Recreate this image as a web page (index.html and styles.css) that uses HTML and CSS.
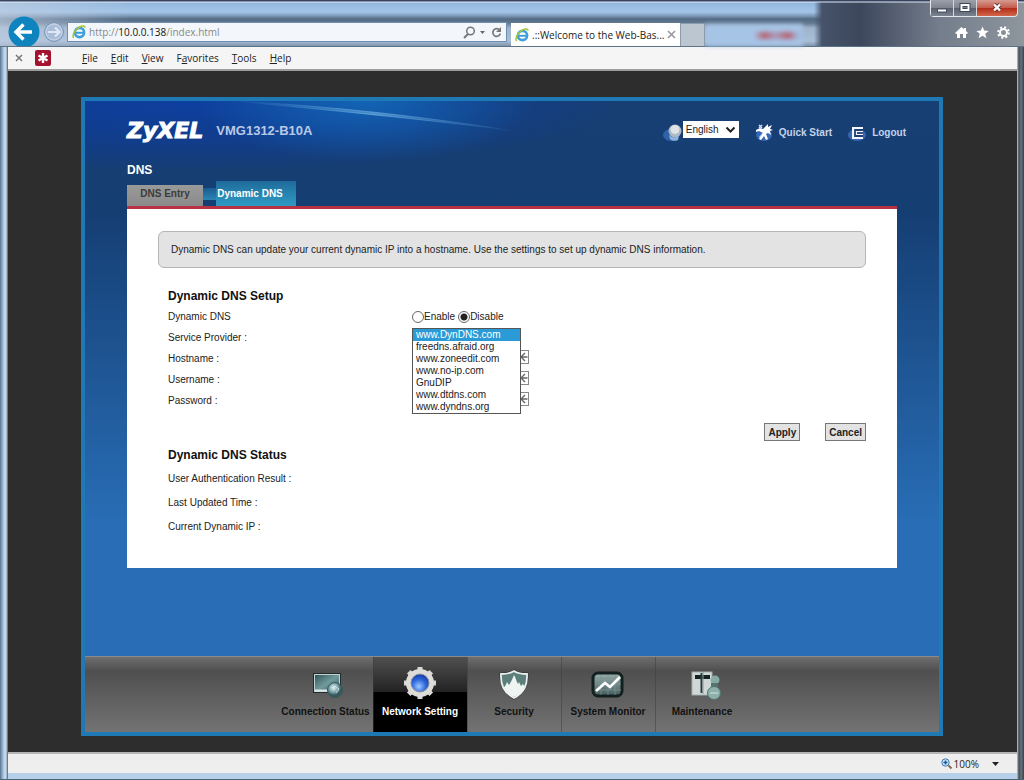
FILE: index.html
```
<!DOCTYPE html>
<html lang="en">
<head>
  <meta charset="UTF-8">
  <title>.::Welcome to the Web-Based Configurator::.</title>
  <link rel="stylesheet" href="styles.css">
</head>
<body>
  <div class="window">
    <header class="chrome">
      <div class="glass-ghost"></div>
      <div class="window-buttons">
        <button type="button" class="win-btn" aria-label="Minimize"><svg width="12" height="12" viewBox="0 0 12 12"><rect x="1.500" y="7" width="9" height="3" fill="#fff" stroke="#4a4f5c"/></svg></button>
        <button type="button" class="win-btn" aria-label="Maximize"><svg width="12" height="12" viewBox="0 0 12 12"><rect x="2.500" y="3" width="7" height="5" fill="none" stroke="#3f4655" stroke-width="4"/><rect x="2.500" y="3" width="7" height="5" fill="none" stroke="#fff" stroke-width="2"/></svg></button>
        <button type="button" class="win-btn win-close" aria-label="Close"><svg width="12" height="12" viewBox="0 0 12 12"><path d="M3 2.500l6 6M9 2.500l-6 6" stroke="#64302c" stroke-width="4"/><path d="M3 2.500l6 6M9 2.500l-6 6" stroke="#fff" stroke-width="2.400"/></svg></button>
      </div>
      <div class="nav-row">
        <button type="button" class="back" aria-label="Back"><svg width="32" height="32" viewBox="0 0 32 32"><circle cx="16" cy="16" r="15.500" fill="#0e84bf"/><path d="M24 16H9M15.500 8.500L8 16l7.500 7.500" fill="none" stroke="#fff" stroke-width="3.400"/></svg></button>
        <button type="button" class="forward" aria-label="Forward"><svg width="22" height="22" viewBox="0 0 22 22"><circle cx="11" cy="11" r="9.500" fill="#a9bdd8" stroke="#7d93b5"/><circle cx="11" cy="11" r="8" fill="none" stroke="#c9d7ea"/><path d="M5 11h11M12 6.500l4.500 4.500-4.500 4.500" fill="none" stroke="#dfe9f6" stroke-width="2.200"/></svg></button>
        <div class="address">
          <svg class="ie" width="14" height="14" viewBox="0 0 14 14"><circle cx="7.500" cy="7.500" r="4.600" fill="none" stroke="#3f9fdc" stroke-width="2.600"/><path d="M4 7.800h8" stroke="#3f9fdc" stroke-width="2"/><path d="M1.500 13C0 10 3 4 8 1.800c3-1.300 5-.8 5 1" fill="none" stroke="#a9c63a" stroke-width="1.600"/></svg>
          <p class="url">http://<b>10.0.0.138</b>/index.html</p>
          <button type="button" class="plain" aria-label="Search"><svg width="13" height="13" viewBox="0 0 13 13"><circle cx="7.500" cy="5" r="3.800" fill="none" stroke="#777" stroke-width="1.500"/><path d="M5 8L1 12" stroke="#777" stroke-width="2"/></svg></button>
          <button type="button" class="plain" aria-label="Show address bar list"><svg width="7" height="13" viewBox="0 0 7 13"><path d="M1 5h5L3.500 8z" fill="#666"/></svg></button>
          <button type="button" class="plain refresh" aria-label="Refresh"><svg width="13" height="13" viewBox="0 0 13 13"><path d="M9.500 4A3.800 3.800 0 1 0 10.300 7.500" fill="none" stroke="#777" stroke-width="1.700"/><path d="M11 1v5H6z" fill="#777"/></svg></button>
        </div>
        <div class="browser-tab">
          <svg class="ie" width="14" height="14" viewBox="0 0 14 14"><circle cx="7.500" cy="7.500" r="4.600" fill="none" stroke="#3f9fdc" stroke-width="2.600"/><path d="M4 7.800h8" stroke="#3f9fdc" stroke-width="2"/><path d="M1.500 13C0 10 3 4 8 1.800c3-1.300 5-.8 5 1" fill="none" stroke="#a9c63a" stroke-width="1.600"/></svg>
          <span class="browser-tab-title">.::Welcome to the Web-Bas...</span>
          <button type="button" class="plain" aria-label="Close tab"><svg width="9" height="9" viewBox="0 0 9 9"><path d="M1 1l7 7M8 1L1 8" stroke="#999" stroke-width="1.600"/></svg></button>
        </div>
        <button type="button" class="new-tab" aria-label="New tab"></button>
        <div class="tools">
          <button type="button" class="plain" aria-label="Home"><svg width="13" height="13" viewBox="0 0 13 13"><path d="M6.500 1L0 7l1.200 1L2 7.400V12h3V8h3v4h3V7.400l.8.600L13 7l-2-1.900V2H9v1.300z" fill="#fff"/></svg></button>
          <button type="button" class="plain" aria-label="Favorites"><svg width="13" height="13" viewBox="0 0 13 13"><path d="M6.500.500l1.700 4.100 4.500.300-3.500 2.900 1.200 4.400-3.900-2.500-3.900 2.500 1.200-4.400L.300 4.900l4.500-.300z" fill="#fff"/></svg></button>
          <button type="button" class="plain" aria-label="Tools"><svg width="13" height="13" viewBox="0 0 13 13"><circle cx="6.500" cy="6.500" r="5.300" fill="none" stroke="#fff" stroke-width="2" stroke-dasharray="2.080"/><circle cx="6.500" cy="6.500" r="3.500" fill="none" stroke="#fff" stroke-width="2"/></svg></button>
        </div>
      </div>
    </header>

    <nav class="menu-bar">
      <button type="button" class="plain" aria-label="Close menu bar"><svg width="8" height="8" viewBox="0 0 8 8"><path d="M1 1l6 6M7 1L1 7" stroke="#777" stroke-width="1.500"/></svg></button>
      <button type="button" class="plain addon" aria-label="Add-on"><svg width="16" height="16" viewBox="0 0 16 16"><rect width="16" height="16" rx="2" fill="#a3122f"/><path d="M8 3v10M3.500 5.500l9 5M12.500 5.500l-9 5" stroke="#fff" stroke-width="2.400"/></svg></button>
      <a href="#file"><u>F</u>ile</a>
      <a href="#edit"><u>E</u>dit</a>
      <a href="#view"><u>V</u>iew</a>
      <a href="#favorites">F<u>a</u>vorites</a>
      <a href="#tools"><u>T</u>ools</a>
      <a href="#help"><u>H</u>elp</a>
    </nav>

    <main class="page">
      <div class="router">
        <svg class="swoosh" width="440" height="60" viewBox="0 0 440 60"><defs><linearGradient id="swoosh"><stop offset="0" stop-color="#6db4e8" stop-opacity="0"/><stop offset=".5" stop-color="#8ccaf0" stop-opacity=".45"/><stop offset="1" stop-color="#6db4e8" stop-opacity="0"/></linearGradient></defs><path d="M150 0C230 4 330 14 430 30 330 17 230 8 150 0z" fill="url(#swoosh)" stroke="url(#swoosh)"/></svg>
        <div class="router-body">
          <div class="top">
            <span class="logo">ZyXEL</span>
            <span class="model">VMG1312-B10A</span>
            <div class="top-links">
              <label class="language" for="language" aria-label="Language">
                <svg width="20" height="20" viewBox="0 0 20 20"><ellipse cx="8" cy="13" rx="8" ry="6" fill="#2f62a8"/><circle cx="12" cy="9" r="6.500" fill="#aeb9c6"/><circle cx="12" cy="7.500" r="4.500" fill="#dfe3e6"/><path d="M6 13c3 3 7 3 10 1l-1 4c-3 1.500-6 1-8-1z" fill="#8fb2df"/></svg>
                <span class="language-box">
                  <select id="language"><option>English</option></select>
                  <svg class="caret" width="11" height="8" viewBox="0 0 11 8"><path d="M1.500 1.500l4 4 4-4" fill="none" stroke="#222" stroke-width="2"/></svg>
                </span>
              </label>
              <a href="#quickstart">
                <svg width="20" height="20" viewBox="0 0 20 20"><ellipse cx="9" cy="13" rx="8" ry="6" fill="#3569b3"/><path d="M5 16l6-7" stroke="#9fc0ea" stroke-width="3"/><path d="M13 2l0 3 4-2-2 4 3 1-3 1 1 4-3-2-2 1 2 5-2 1-2-4-3 4-2-1 4-6-4-2-3 1 0-2 4-2 3 1z" fill="#fff"/><path d="M4 3l3 3M7 3L4 6" stroke="#cfe0f7" stroke-width="1.500"/></svg>
                Quick Start
              </a>
              <a href="#logout">
                <svg width="20" height="20" viewBox="0 0 20 20"><ellipse cx="9" cy="13" rx="9" ry="6" fill="#3569b3"/><path d="M4 5h11v12H4z" fill="#f2f6fc"/><path d="M15 8H7v6h8" fill="none" stroke="#1d3f74" stroke-width="1.800"/><path d="M9 11h6" stroke="#1d3f74" stroke-width="1.800"/></svg>
                Logout
              </a>
            </div>
          </div>

          <h1 class="page-title">DNS</h1>
          <div class="tabs">
            <a href="#dnsentry" class="tab">DNS Entry</a>
            <span class="tab-link"></span>
            <a href="#dyndns" class="tab tab-active">Dynamic DNS</a>
          </div>

          <div class="panel">
            <p class="info">Dynamic DNS can update your current dynamic IP into a hostname. Use the settings to set up dynamic DNS information.</p>
            <form class="setup">
              <h2>Dynamic DNS Setup</h2>
              <div class="row">
                <span class="name">Dynamic DNS</span>
                <input type="radio" id="enable" name="ddns"><label for="enable">Enable</label>
                <input type="radio" id="disable" name="ddns" class="second" checked><label for="disable">Disable</label>
              </div>
              <div class="row">
                <label class="name" for="provider">Service Provider :</label>
                <div class="provider">
                  <select id="provider" size="7">
                    <option selected>www.DynDNS.com</option>
                    <option>freedns.afraid.org</option>
                    <option>www.zoneedit.com</option>
                    <option>www.no-ip.com</option>
                    <option>GnuDIP</option>
                    <option>www.dtdns.com</option>
                    <option>www.dyndns.org</option>
                  </select>
                </div>
              </div>
              <div class="row">
                <label class="name" for="hostname">Hostname :</label>
                <input type="text" id="hostname" class="field">
                <button type="button" class="fill" aria-label="Fill hostname"><svg width="8" height="10" viewBox="0 0 8 10"><path d="M7.500 5H1M5 1L1 5l4 4" fill="none" stroke="#666" stroke-width="1.400"/></svg></button>
              </div>
              <div class="row">
                <label class="name" for="username">Username :</label>
                <input type="text" id="username" class="field">
                <button type="button" class="fill" aria-label="Fill username"><svg width="8" height="10" viewBox="0 0 8 10"><path d="M7.500 5H1M5 1L1 5l4 4" fill="none" stroke="#666" stroke-width="1.400"/></svg></button>
              </div>
              <div class="row">
                <label class="name" for="password">Password :</label>
                <input type="password" id="password" class="field">
                <button type="button" class="fill" aria-label="Fill password"><svg width="8" height="10" viewBox="0 0 8 10"><path d="M7.500 5H1M5 1L1 5l4 4" fill="none" stroke="#666" stroke-width="1.400"/></svg></button>
              </div>
              <div class="actions">
                <button type="submit">Apply</button>
                <button type="reset">Cancel</button>
              </div>
            </form>
            <section class="status">
              <h2>Dynamic DNS Status</h2>
              <p>User Authentication Result :</p>
              <p>Last Updated Time :</p>
              <p>Current Dynamic IP :</p>
            </section>
          </div>
        </div>

        <nav class="dock">
          <a href="#status" class="dock-item">
            <svg width="34" height="34" viewBox="0 0 34 34"><defs><linearGradient id="scr" x2="1" y2="1"><stop offset="0" stop-color="#2c4a4c"/><stop offset=".5" stop-color="#6f9a9c"/><stop offset="1" stop-color="#35585b"/></linearGradient><radialGradient id="orb" cx=".4" cy=".35"><stop offset="0" stop-color="#dff0f0"/><stop offset=".6" stop-color="#7ba5aa"/><stop offset="1" stop-color="#36575c"/></radialGradient></defs><rect x="4.500" y="7.500" width="27" height="19" fill="url(#scr)" stroke="#1e2c2d"/><rect x="5.500" y="8.500" width="25" height="17" fill="none" stroke="#c4d2d2"/><path d="M6 24.500h22" stroke="#dfe6e6" stroke-width="2"/><circle cx="26" cy="24" r="7.500" fill="url(#orb)" stroke="#39585a"/><path d="M22 22l4-2 4 3-3 4M25 20v4" fill="none" stroke="#d7eaea" stroke-width=".8"/></svg>
            Connection Status
          </a>
          <a href="#network" class="dock-item dock-active">
            <svg width="34" height="34" viewBox="0 0 34 34"><defs><radialGradient id="blue" cx=".45" cy=".65" r=".6"><stop offset="0" stop-color="#9cc8ff"/><stop offset=".5" stop-color="#2e69dc"/><stop offset="1" stop-color="#102d98"/></radialGradient></defs><path d="M17 1v32M1 17h32M5.700 5.700l22.600 22.600M28.300 5.700L5.700 28.300" stroke="#d9d8d4" stroke-width="5"/><circle cx="17" cy="17" r="11.500" fill="url(#blue)" stroke="#dedcd8" stroke-width="5"/><circle cx="17" cy="17" r="9" fill="none" stroke="#8b8f9b"/></svg>
            Network Setting
          </a>
          <a href="#security" class="dock-item">
            <svg width="34" height="34" viewBox="0 0 34 34"><path d="M17 5c3 2 9 3 13 3 .5 10-2 18-13 24C6 26 3.500 18 4 8c4 0 10-1 13-3z" fill="#5d7f7b" stroke="#333" stroke-width="3"/><path d="M17 5c3 2 9 3 13 3 .5 10-2 18-13 24C6 26 3.500 18 4 8c4 0 10-1 13-3z" fill="#5d7f7b" stroke="#e8efed" stroke-width="1.800"/><path d="M6 22c3-2 3-4 4-6l2 3c2-3 3-5 5-10 2 3 2 6 4 9l1-2 2 4 2-2 2 3c-2 4-6 8-11 10-5-2-9-5-11-9z" fill="#edf4f1"/></svg>
            Security
          </a>
          <a href="#monitor" class="dock-item">
            <svg width="34" height="34" viewBox="0 0 34 34"><defs><linearGradient id="mon" x2="0" y2="1"><stop offset="0" stop-color="#9bb0ae"/><stop offset="1" stop-color="#425c5c"/></linearGradient></defs><rect x="2" y="7" width="29" height="23" rx="5" fill="url(#mon)" stroke="#13201f" stroke-width="3"/><path d="M4 12h26M4 18h26M4 24h26M10 9v20M17 9v20M24 9v20" stroke="#7c9492" stroke-width=".7"/><path d="M5 25l9-8 5 4 10-10" fill="none" stroke="#fff" stroke-width="2.600"/></svg>
            System Monitor
          </a>
          <a href="#maintenance" class="dock-item">
            <svg width="38" height="34" viewBox="0 0 38 34"><rect x="9" y="6" width="20" height="23" fill="#cfd8d7" stroke="#a5b0ae"/><path d="M12 9h15v4H12z" fill="#152222"/><path d="M18.500 7v20" stroke="#2a3a3b" stroke-width="2"/><path d="M20 6v22" stroke="#8b9c9c"/><circle cx="32" cy="14" r="4.500" fill="#86aaa4"/><path d="M28 17h7v6h-7z" fill="#52746f"/><circle cx="31" cy="27" r="6.500" fill="#8db0aa" stroke="#52746f"/><path d="M27 27h8" stroke="#d6e5e2"/></svg>
            Maintenance
          </a>
        </nav>
      </div>
    </main>

    <footer class="status-bar">
      <button type="button" class="plain zoom">
        <svg width="11" height="11" viewBox="0 0 11 11"><circle cx="4.500" cy="4.500" r="3.700" fill="#cfe4f7" stroke="#3c78b4"/><path d="M2.500 4.500h4M4.500 2.500v4" stroke="#17599a" stroke-width="1.400"/><path d="M7.500 7.500l3 3" stroke="#8a6a4a" stroke-width="2"/></svg>
        100%
        <svg class="zoom-caret" width="7" height="4" viewBox="0 0 7 4"><path d="M0 0h7L3.500 4z" fill="#222"/></svg>
      </button>
    </footer>
  </div>
</body>
</html>
```
FILE: styles.css
```
* {
  box-sizing: border-box;
}
body {
  margin: 0;
  font-family: "Liberation Sans", Arial, sans-serif;
  font-size: 10px;
  color: #222;
}
a {
  color: inherit;
  text-decoration: none;
}
h1, h2, p {
  margin: 0;
}
svg {
  display: block;
  flex: none;
}
button, select, input {
  font: inherit;
  color: inherit;
}
.plain {
  border: 0;
  background: none;
  padding: 0;
}

/* browser window */
.window {
  position: relative;
  display: flex;
  flex-direction: column;
  min-height: 100vh;
  padding: 0 7px 6px 8px;
  background:
    linear-gradient(90deg, #56758f 0, #b9d2ea 4px, #c8d8ea 6px, #3f5f74 8px, transparent 8px),
    linear-gradient(270deg, #35424d 0, #68747d 3px, #3f4a54 5px, #c4ccd2 7px, transparent 7px),
    linear-gradient(#a9c4df, #b7d0ea);
  border-bottom: 1px solid #4f6377;
}
.chrome {
  display: flex;
  flex-direction: column;
  justify-content: flex-end;
  height: 47px;
  margin: 0 -7px 0 -8px;
  padding: 0 14px 0 8px;
  border-bottom: 1px solid #5a7389;
  background:
    linear-gradient(#38435f 0, #38435f 1px, #dfeaf5 2px, transparent 3px),
    linear-gradient(90deg, transparent 0, transparent 814px, #46536a 822px, #3d475c 860px, #747e8c 940px, #8d959d 100%),
    linear-gradient(90deg, rgba(190, 205, 225, .7) 0, transparent 130px),
    linear-gradient(#8fb4da 0, #a3c5e9 12px, #7d98b5 16px, #536b85 19px, #62788f 23px, #9eb3cb 28px, #a9bfd9 41px, #8095ab 46px);
}
.glass-ghost {
  position: absolute;
  top: 24px;
  left: 705px;
  width: 98px;
  height: 22px;
  background: linear-gradient(90deg, transparent 50%, #b8606d 60%, #a89ab8 72%, #b8606d 85%, #9fbde0 95%) center / 100% 7px no-repeat, #a6c4e6;
  filter: blur(2px);
}
.window-buttons {
  position: absolute;
  top: 0;
  right: 6px;
  display: flex;
  border: 1px solid #e3e6ea;
  border-top: 0;
  border-radius: 0 0 4px 4px;
}
.win-btn {
  display: flex;
  justify-content: center;
  align-items: center;
  width: 23px;
  height: 16px;
  padding: 0;
  border: 0;
  border-right: 1px solid #d4d8dc;
  background: linear-gradient(#9ba0a9, #7d828d 50%, #565d6b 50%, #7b8390);
}
.win-close {
  width: 40px;
  border-right: 0;
  border-radius: 0 0 4px 0;
  background: linear-gradient(#d69b90, #c4594a 50%, #b02b17 50%, #d4664a);
}
.nav-row {
  position: relative;
  display: flex;
  align-items: flex-end;
  font-family: "Open Sans", "Noto Sans", sans-serif;
}
.back, .forward {
  border: 0;
  padding: 0;
  background: none;
  overflow: hidden;
}
.back {
  height: 30px;
}
.forward {
  height: 22px;
  margin: 0 2px 3px 3px;
}
.address {
  display: flex;
  align-items: center;
  width: 440px;
  height: 20px;
  margin-bottom: 4px;
  padding: 0 3px 0 4px;
  border: 1px solid #6f8fb0;
  background: #f3f7fb;
}
.url {
  flex: 1;
  margin-left: 3px;
  color: #888;
}
.url b {
  font-weight: normal;
  color: #111;
}
.address .plain + .plain {
  margin-left: 3px;
}
.address .refresh.plain {
  margin-left: 4px;
}
.browser-tab {
  display: flex;
  align-items: center;
  width: 169px;
  height: 23px;
  margin-left: 4px;
  padding: 0 4px;
  background: #fff;
}
.browser-tab-title {
  flex: 1;
  margin-left: 3px;
  white-space: nowrap;
}
.new-tab {
  width: 25px;
  height: 23px;
  border: 1px solid #8b9bab;
  border-bottom: 0;
  background: #bcc6d0;
}
.tools {
  display: flex;
  gap: 8px;
  margin-left: auto;
  padding: 0 0 7px;
}
.menu-bar {
  display: flex;
  align-items: center;
  height: 24px;
  padding: 0 0 1px 7px;
  border-bottom: 2px solid #9d9d9d;
  background: #f5f5f5;
  font-family: "Open Sans", "Noto Sans", sans-serif;
}
.menu-bar a {
  margin-right: 13px;
}
.addon {
  margin: 0 31px 0 12px;
}

/* router page */
.page {
  display: flex;
  flex: 1;
  padding: 26px 74px 16px 73px;
  background: #2d2d2d;
}
.router {
  position: relative;
  display: flex;
  flex-direction: column;
  flex: 1;
  border: 4px solid #1f79b5;
  background:
    radial-gradient(ellipse 170px 60px at 280px 0, rgba(20, 110, 190, .8), transparent),
    radial-gradient(ellipse 440px 70px at 100px 0, #0d3fa0, rgba(15, 60, 150, .7) 55%, transparent),
    linear-gradient(#173f74 0, #153e73 110px, #286db5 420px, #286db5);
}
.swoosh {
  position: absolute;
  top: 0;
  left: 0;
  pointer-events: none;
}
.router-body {
  flex: 1;
  padding: 0 42px 48px;
}
.top {
  display: flex;
  align-items: center;
  height: 58px;
}
.logo {
  font-family: "DejaVu Sans", sans-serif;
  font-size: 22px;
  font-weight: bold;
  font-style: italic;
  color: #fff;
  -webkit-text-stroke: 1px #fff;
}
.model {
  margin-left: 13px;
  font-size: 13px;
  font-weight: bold;
  color: #b9c9e8;
}
.top-links {
  display: flex;
  gap: 16px;
  align-items: center;
  margin: 0 -9px 0 auto;
  padding-top: 4px;
  font-weight: bold;
  color: #c3d3ea;
}
.top-links a, .language {
  display: flex;
  align-items: center;
  gap: 4px;
}
.language {
  gap: 0;
}
.language-box {
  position: relative;
  margin-bottom: 5px;
}
.language select {
  display: block;
  width: 56px;
  height: 17px;
  padding: 0 2px;
  border: 1px solid #fff;
  border-radius: 0;
  appearance: none;
  background: #fff;
  font-weight: normal;
  color: #222;
}
.caret {
  position: absolute;
  top: 5px;
  right: 3px;
  pointer-events: none;
}
.page-title {
  padding-top: 3px;
  font-size: 12px;
  line-height: 16px;
  color: #fff;
}
.tabs {
  display: flex;
  align-items: flex-end;
  height: 28px;
  font-weight: bold;
}
.tab {
  width: 76px;
  height: 21px;
  line-height: 18px;
  text-align: center;
  background: linear-gradient(#9a9a9a, #8a8a8a);
  color: #3c3c3c;
}
.tab-link {
  width: 13px;
  height: 12px;
  margin-bottom: 6px;
  background: linear-gradient(#1c5a90, #2a86b4);
}
.tab-active {
  width: 80px;
  height: 25px;
  padding-right: 12px;
  line-height: 26px;
  white-space: nowrap;
  background: linear-gradient(#1f6b9b, #2f9bc4);
  color: #fff;
}
.panel {
  padding: 22px 31px 29px;
  border-top: 3px solid #b83244;
  background: #fff;
}
.info {
  padding: 11px 12px;
  border: 1px solid #b5b5b5;
  border-radius: 6px;
  background: #e3e3e3;
  line-height: 13px;
}
.setup {
  padding: 19px 0 0 10px;
}
.panel h2 {
  font-size: 12px;
  line-height: 19px;
  color: #111;
}
.row {
  display: flex;
  align-items: center;
  height: 21px;
}
.name {
  width: 244px;
}
.row input[type="radio"] {
  width: 12px;
  height: 12px;
  margin: 0;
  border: 1px solid #666;
  border-radius: 50%;
  appearance: none;
  background: #fff;
}
.row input[type="radio"]:checked {
  background: radial-gradient(#222 0 3px, #fff 4px);
}
.row input.second {
  margin-left: 3px;
}
.provider {
  position: relative;
  align-self: stretch;
}
.provider select {
  position: absolute;
  top: 1px;
  left: 0;
  z-index: 1;
  width: 109px;
  height: 86px;
  padding: 0;
  border: 1px solid #555;
  border-radius: 0;
  outline: 0;
  background: #fff;
  overflow: hidden;
}
.provider option {
  min-height: 12px;
  height: 12px;
  padding: 0 3px;
  line-height: 12px;
}
.provider option:checked {
  background: linear-gradient(#2a9bd6, #2a9bd6);
  color: #fff;
}
.field {
  width: 106px;
  height: 14px;
  border: 1px solid #888;
}
.fill {
  display: flex;
  justify-content: center;
  align-items: center;
  width: 11px;
  height: 14px;
  margin-bottom: 4px;
  padding: 0;
  border: 1px solid #888;
  background: #fff;
}
.actions {
  display: flex;
  justify-content: flex-end;
  gap: 25px;
  padding-top: 12px;
}
.actions button {
  height: 18px;
  padding: 0 3px;
  border: 1px solid #777;
  background: #e3e3e3;
  font-weight: bold;
}
.status {
  padding: 5px 0 0 10px;
}
.status h2 {
  margin-bottom: 2px;
}
.status p {
  line-height: 24px;
}

/* bottom navigation */
.dock {
  display: flex;
  justify-content: center;
  height: 76px;
  padding-left: 3px;
  border-top: 1px solid #8a8a8a;
  background: linear-gradient(#6e6e6e 0, #4f4f4f 14px, #737373 100%);
}
.dock-item {
  display: flex;
  flex-direction: column;
  align-items: center;
  gap: 4px;
  width: 94px;
  padding-top: 9px;
  border-left: 1px solid rgba(60, 60, 60, .5);
  font-weight: bold;
  line-height: 16px;
  white-space: nowrap;
  color: #111;
}
.dock-item:first-child {
  border-left: 0;
}
.dock-active {
  background: linear-gradient(#505050, #222 35px, #000 35px);
  color: #fff;
}

.status-bar {
  display: flex;
  justify-content: flex-end;
  align-items: center;
  height: 21px;
  padding-right: 18px;
  border-top: 2px solid #b5b5b5;
  background: #eee;
  font-family: "Open Sans", "Noto Sans", sans-serif;
}
.zoom {
  display: flex;
  align-items: center;
  gap: 2px;
}
.zoom-caret {
  margin-left: 11px;
}
```
